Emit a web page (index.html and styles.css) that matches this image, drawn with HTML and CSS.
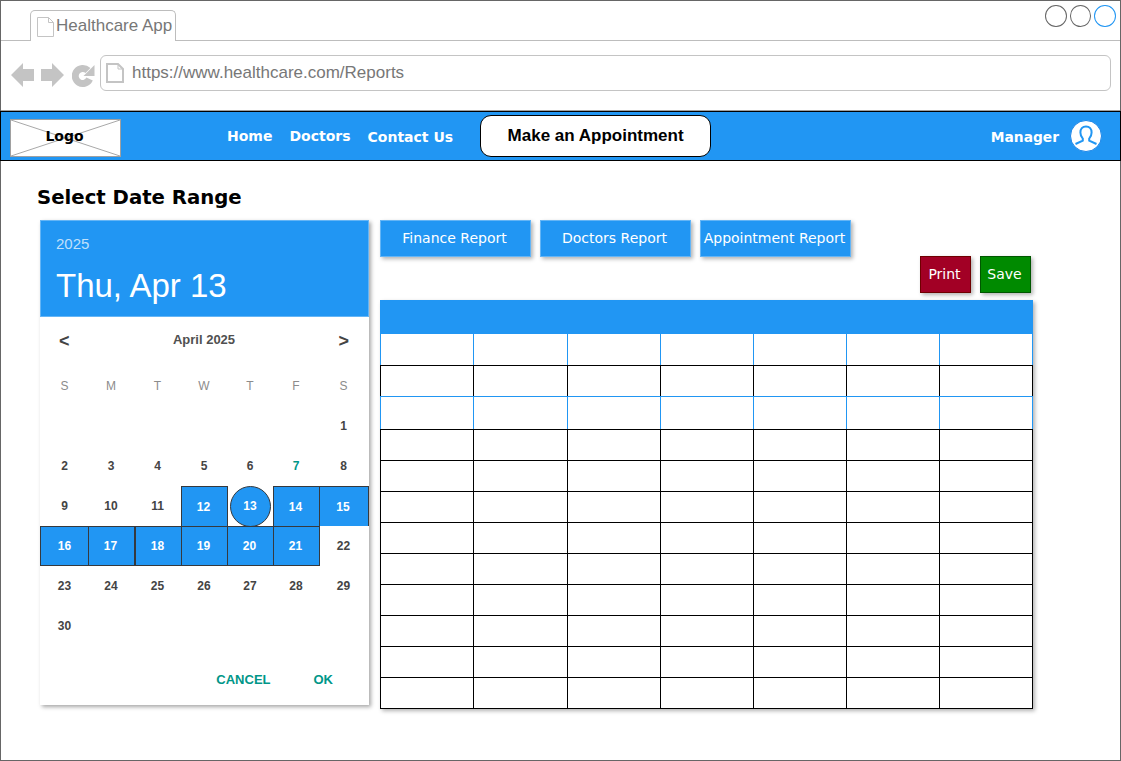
FILE: index.html
```html
<!DOCTYPE html>
<html lang="en">
<head>
<meta charset="utf-8">
<title>Healthcare App</title>
<link rel="stylesheet" href="styles.css">
</head>
<body>
<div class="browser">
  <div class="tabbar">
    <div class="tab">
      <svg class="tab-doc" viewBox="0 0 17 20"><path d="M.5.5H11.5L16.5 5.5V19.5H.5Z" fill="#fff" stroke="#c4c4c4"/><path d="M11.5.5V5.5H16.5" fill="none" stroke="#c4c4c4"/></svg>
      <span>Healthcare App</span>
    </div>
    <div class="win-controls">
      <span class="win-dot"></span><span class="win-dot"></span><span class="win-dot win-dot-blue"></span>
    </div>
  </div>
  <div class="toolbar">
    <svg class="nav-icon" viewBox="0 0 23 26"><path d="M0 13 12 1V7H23V19H12V25Z" fill="#c4c4c4"/></svg>
    <svg class="nav-icon fwd" viewBox="0 0 23 26"><path d="M23 13 11 1V7H0V19H11V25Z" fill="#c4c4c4"/></svg>
    <svg class="nav-icon reload" viewBox="0 0 23 26"><path d="M16 8.6A7.5 7.5 0 1 0 17.6 17" fill="none" stroke="#c4c4c4" stroke-width="7"/><path d="M22.5 3V14H11.5Z" fill="#c4c4c4"/></svg>
    <div class="address">
      <svg class="addr-doc" viewBox="0 0 18 20"><path d="M1 1H12L17 6V19H1Z" fill="#fff" stroke="#c4c4c4" stroke-width="2"/><path d="M12 1V6H17" fill="none" stroke="#c4c4c4"/></svg>
      <span>https://www.healthcare.com/Reports</span>
    </div>
  </div>
  <nav class="topnav">
    <div class="logo">
      <svg class="logo-x" viewBox="0 0 109 36" preserveAspectRatio="none"><path d="M0 0 109 36M109 0 0 36" stroke="#a8a8a8" fill="none"/></svg>
      <span class="logo-text">Logo</span>
    </div>
    <a class="nav-link nav-home">Home</a>
    <a class="nav-link nav-doctors">Doctors</a>
    <a class="nav-link nav-contact">Contact Us</a>
    <button class="cta">Make an Appointment</button>
    <span class="manager">Manager</span>
    <svg class="avatar" viewBox="0 0 32 32">
      <circle cx="16" cy="16" r="15.5" fill="#fff" stroke="#1a85e8" stroke-width="1"/>
      <path d="M16 6.5C12.4 6.5 10.4 9.2 10.4 12.4 10.4 15 11.5 17.2 12.8 18.6V20.6L5.5 24" fill="none" stroke="#2196f3" stroke-width="2"/>
      <path d="M16 6.5C19.6 6.5 21.6 9.2 21.6 12.4 21.6 15 20.5 17.2 19.2 18.6V20.6L26.5 24" fill="none" stroke="#2196f3" stroke-width="2"/>
    </svg>
  </nav>
  <main class="main">
    <h1 class="title">Select Date Range</h1>
    <div class="content">
      <section class="calendar">
        <header class="cal-head">
          <div class="cal-year">2025</div>
          <div class="cal-date">Thu, Apr 13</div>
        </header>
        <div class="cal-month">
          <span class="chev">&lt;</span>
          <span class="month-name">April 2025</span>
          <span class="chev">&gt;</span>
        </div>
        <div class="cal-grid">
          <div class="wd">S</div><div class="wd">M</div><div class="wd">T</div><div class="wd">W</div><div class="wd">T</div><div class="wd">F</div><div class="wd">S</div>
          <div></div><div></div><div></div><div></div><div></div><div></div><div class="d">1</div>
          <div class="d">2</div><div class="d">3</div><div class="d">4</div><div class="d">5</div><div class="d">6</div><div class="d today">7</div><div class="d">8</div>
          <div class="d">9</div><div class="d">10</div><div class="d">11</div><div class="d sel pull">12</div><div class="d"><span class="circle">13</span></div><div class="d sel pull">14</div><div class="d sel">15</div>
          <div class="d sel first low">16</div><div class="d sel low">17</div><div class="d sel first low">18</div><div class="d sel low">19</div><div class="d sel low">20</div><div class="d sel low">21</div><div class="d">22</div>
          <div class="d">23</div><div class="d">24</div><div class="d">25</div><div class="d">26</div><div class="d">27</div><div class="d">28</div><div class="d">29</div>
          <div class="d">30</div>
        </div>
        <div class="cal-foot">
          <span class="cal-btn">CANCEL</span>
          <span class="cal-btn">OK</span>
        </div>
      </section>
      <section class="reports">
        <div class="report-tabs">
          <button class="rbtn">Finance Report</button>
          <button class="rbtn">Doctors Report</button>
          <button class="rbtn">Appointment Report</button>
        </div>
        <div class="actions">
          <button class="abtn print">Print</button>
          <button class="abtn save">Save</button>
        </div>
        <div class="sheet">
          <div class="sheet-head"></div>
          <table class="sheet-table">
            <colgroup><col class="c93"><col class="c94"><col class="c93"><col class="c93"><col class="c93"><col class="c93"><col class="c93"></colgroup>
            <tbody>
              <tr class="r32 blue"><td></td><td></td><td></td><td></td><td></td><td></td><td></td></tr>
              <tr class="r31 blue-bottom"><td></td><td></td><td></td><td></td><td></td><td></td><td></td></tr>
              <tr class="r33 blue"><td></td><td></td><td></td><td></td><td></td><td></td><td></td></tr>
              <tr class="r31"><td></td><td></td><td></td><td></td><td></td><td></td><td></td></tr>
              <tr class="r31"><td></td><td></td><td></td><td></td><td></td><td></td><td></td></tr>
              <tr class="r31"><td></td><td></td><td></td><td></td><td></td><td></td><td></td></tr>
              <tr class="r31"><td></td><td></td><td></td><td></td><td></td><td></td><td></td></tr>
              <tr class="r31"><td></td><td></td><td></td><td></td><td></td><td></td><td></td></tr>
              <tr class="r31"><td></td><td></td><td></td><td></td><td></td><td></td><td></td></tr>
              <tr class="r31"><td></td><td></td><td></td><td></td><td></td><td></td><td></td></tr>
              <tr class="r31"><td></td><td></td><td></td><td></td><td></td><td></td><td></td></tr>
              <tr class="r31"><td></td><td></td><td></td><td></td><td></td><td></td><td></td></tr>
            </tbody>
          </table>
        </div>
      </section>
    </div>
  </main>
</div>
</body>
</html>
```
FILE: styles.css
```css
* { box-sizing: border-box; }
html, body { margin: 0; padding: 0; background: #fff; }
body { font-family: "Liberation Sans", Arial, sans-serif; overflow: hidden; }

.browser {
  width: 1121px;
  height: 761px;
  border: 1px solid #666;
  display: flex;
  flex-direction: column;
  background: #fff;
}

/* tab strip */
.tabbar {
  height: 40px;
  flex: none;
  display: flex;
  align-items: flex-end;
  padding-left: 29px;
  border-bottom: 1px solid #bdbdbd;
}
.tab {
  width: 146px;
  height: 31px;
  margin-bottom: -1px;
  background: #fff;
  border: 1px solid #bdbdbd;
  border-bottom: 0;
  border-radius: 5px 5px 0 0;
  display: flex;
  align-items: center;
  padding: 0 0 0 6px;
  gap: 2px;
  color: #777;
  font-size: 17px;
  white-space: nowrap;
}
.tab-doc { width: 17px; height: 20px; flex: none; margin-top: 1px; }
.win-controls {
  margin-left: auto;
  align-self: flex-start;
  display: flex;
  gap: 3px;
  padding: 4px 4px 0 0;
}
.win-dot {
  width: 21.67px;
  height: 22px;
  border-radius: 50%;
  border: 1px solid #666;
  background: #fff;
}
.win-dot-blue { border-color: #2196f3; }

/* address bar */
.toolbar {
  height: 70px;
  flex: none;
  display: flex;
  align-items: center;
  padding: 0 9px 6px 10px;
  border-bottom: 1px solid #a0a0a0;
}
.nav-icon { width: 23px; height: 26px; flex: none; margin-top: 5px; }
.fwd { margin-left: 7px; }
.reload { margin-left: 8px; margin-right: 5px; }
.address {
  flex: 1;
  height: 36px;
  border: 1px solid #c4c4c4;
  border-radius: 6px;
  display: flex;
  align-items: center;
  padding-left: 5px;
  gap: 8px;
  color: #777;
  font-size: 17px;
}
.addr-doc { width: 18px; height: 20px; flex: none; }

/* blue nav */
.topnav {
  height: 50px;
  flex: none;
  margin: 0 -1px;
  background: #2196f3;
  border: 1px solid #000;
  display: flex;
  align-items: center;
  padding-left: 9px;
  position: relative;
}
.logo {
  width: 111px;
  height: 38px;
  margin-top: 3px;
  background: #fff;
  border: 1px solid #a0a0a0;
  display: flex;
  align-items: center;
  justify-content: center;
  padding: 0 2px 3px 0;
  position: relative;
}
.logo-x { position: absolute; inset: 0; width: 100%; height: 100%; }
.logo-text {
  position: relative;
  font-family: "DejaVu Sans", Verdana, sans-serif;
  font-weight: 700;
  font-size: 14px;
  color: #000;
}
.nav-link {
  font-family: "DejaVu Sans", Verdana, sans-serif;
  font-weight: 700;
  font-size: 14px;
  color: #fff;
  white-space: nowrap;
}
.nav-home { margin-left: 106px; }
.nav-doctors { margin-left: 17px; }
.nav-contact { margin-left: 17px; margin-top: 2px; }
.cta {
  margin-left: 27px;
  width: 231px;
  height: 42px;
  margin-top: -1px;
  background: #fff;
  border: 1px solid #000;
  border-radius: 11px;
  font-family: "Liberation Sans", Arial, sans-serif;
  font-weight: 700;
  font-size: 17px;
  color: #000;
  padding: 0;
}
.manager {
  margin-left: auto;
  margin-top: 2px;
  font-family: "DejaVu Sans", Verdana, sans-serif;
  font-weight: 700;
  font-size: 13.8px;
  color: #fff;
}
.avatar { width: 32px; height: 32px; flex: none; margin: 0 18px 0 11px; }

/* main */
.main { flex: 1; padding: 25px 0 0 36px; min-height: 0; }
.title {
  margin: 0 0 10px;
  height: 24px;
  line-height: 24px;
  font-family: "DejaVu Sans", Verdana, sans-serif;
  font-size: 19.7px;
  font-weight: 700;
  color: #000;
}
.content { display: flex; align-items: flex-start; margin-left: 3px; gap: 11px; }

/* calendar */
.calendar {
  width: 329px;
  height: 485px;
  background: #fff;
  box-shadow: 2px 2px 4px rgba(0, 0, 0, .35);
  flex: none;
}
.cal-head {
  height: 97px;
  background: #2196f3;
  border: 1px solid #64b5f6;
  padding: 14px 0 0 15px;
  color: #fff;
}
.cal-year { font-size: 15px; line-height: 18px; color: rgba(255, 255, 255, .72); }
.cal-date { font-size: 33px; line-height: 38px; margin-top: 14px; }
.cal-month {
  height: 49px;
  display: flex;
  align-items: center;
  justify-content: space-between;
  padding: 0 20px 4px 19px;
  color: #444;
}
.month-name { font-size: 13px; font-weight: 700; margin-top: -1px; color: #505050; }
.chev { font-size: 18px; font-weight: 700; line-height: 18px; margin-top: 2px; }
.cal-grid {
  display: grid;
  grid-template-columns: 49px 46px 47px 46px 46px 46px 49px;
  grid-auto-rows: 40px;
}
.wd, .d {
  display: flex;
  align-items: center;
  justify-content: center;
  font-size: 12px;
  padding-right: 2px;
}
.wd:nth-child(7n+1), .d:nth-child(7n+1) { padding-right: 0; }
.wd { color: #8c8c8c; }
.d { color: #444; font-weight: 700; }
.today { color: #009688; }
.sel {
  background: #2196f3;
  color: #fff;
  border-top: 1px solid #36393d;
  border-right: 1px solid #36393d;
}
.first { border-left: 1px solid #36393d; }
.pull { border-left: 1px solid #36393d; margin-left: -1px; }
.low { border-bottom: 1px solid #36393d; }
.circle {
  width: 41px;
  height: 41px;
  flex: none;
  border-radius: 50%;
  background: #2196f3;
  border: 1px solid #36393d;
  color: #fff;
  display: flex;
  align-items: center;
  justify-content: center;
}
.cal-foot {
  height: 59px;
  display: flex;
  justify-content: flex-end;
  align-items: center;
  gap: 43px;
  padding: 7px 36px 0 0;
}
.cal-btn { font-size: 13px; font-weight: 700; color: #009688; }

/* right column */
.reports { width: 653px; flex: none; display: flex; flex-direction: column; }
.report-tabs { display: flex; gap: 9px; }
.rbtn {
  width: 151px;
  height: 37px;
  padding: 0 2px 2px 0;
  background: #2196f3;
  border: 1px solid #64b5f6;
  box-shadow: 2px 2px 4px rgba(0, 0, 0, .3);
  color: #fff;
  font-family: "DejaVu Sans", Verdana, sans-serif;
  font-size: 14px;
  white-space: nowrap;
}
.actions {
  display: flex;
  justify-content: flex-end;
  gap: 9px;
  padding-right: 2px;
  margin-top: -1px;
  margin-bottom: 7px;
}
.abtn {
  width: 51px;
  height: 37px;
  padding: 0 2px 2px 0;
  color: #fff;
  box-shadow: 2px 2px 4px rgba(0, 0, 0, .3);
  font-family: "DejaVu Sans", Verdana, sans-serif;
  font-size: 14px;
}
.print { background: #a20025; border: 1px solid #6f0000; }
.save { background: #008a00; border: 1px solid #005700; }

.sheet { width: 653px; box-shadow: 2px 2px 4px rgba(0, 0, 0, .3); }
.sheet-head { height: 33px; background: #2196f3; }
.sheet-table {
  width: 653px;
  border-collapse: collapse;
  table-layout: fixed;
}
.c93 { width: 93px; }
.c94 { width: 94px; }
.sheet-table td { border: 1px solid #000; padding: 0; }
.r32 { height: 32px; }
.r31 { height: 31px; }
.r33 { height: 33px; }
.blue td {
  border-left-color: #2196f3;
  border-right-color: #2196f3;
  border-top-color: #2196f3;
}
.blue-bottom td { border-bottom-color: #2196f3; }
```
